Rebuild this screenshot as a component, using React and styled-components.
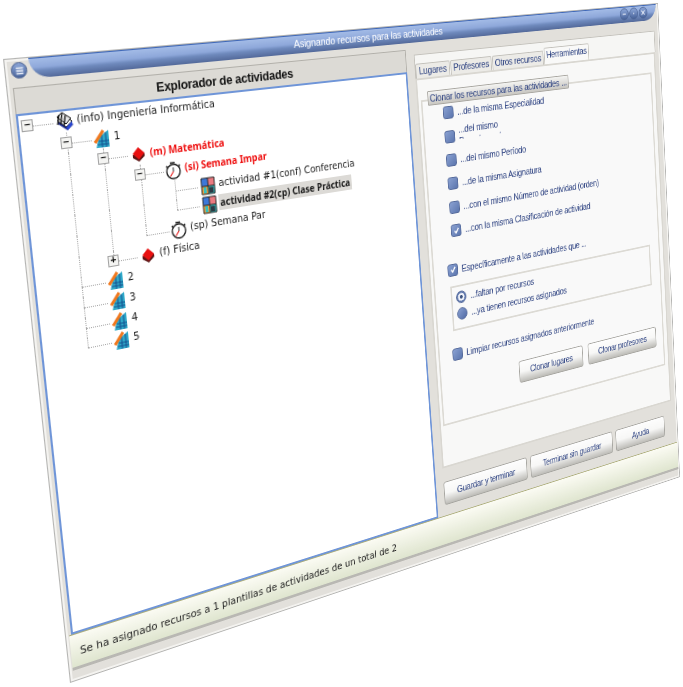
import React from "react";
import styled, { createGlobalStyle } from "styled-components";

// the window is a plain 800x600 page, tilted onto these four corners of the shot
const SRC_W = 800;
const SRC_H = 600;
const tilt = ([x0, y0], [x1, y1], [x2, y2], [x3, y3]) => {
  const dx1 = x1 - x2, dx2 = x3 - x2, sx = x0 - x1 + x2 - x3;
  const dy1 = y1 - y2, dy2 = y3 - y2, sy = y0 - y1 + y2 - y3;
  const det = dx1 * dy2 - dx2 * dy1;
  const g = (sx * dy2 - dx2 * sy) / det;
  const h = (dx1 * sy - sx * dy1) / det;
  const a = x1 - x0 + g * x1, b = x3 - x0 + h * x3;
  const d = y1 - y0 + g * y1, e = y3 - y0 + h * y3;
  return `matrix3d(${a / SRC_W},${d / SRC_W},0,${g / SRC_W},${b / SRC_H},${e / SRC_H},0,${h / SRC_H},0,0,1,0,${x0},${y0},0,1)`;
};
const WINDOW_TILT = tilt([3, 59], [658, 3], [680, 477], [70, 683]);

const Global = createGlobalStyle`
  html, body { margin: 0; background: #fff; overflow: hidden; }
`;

const Stage = styled.div`
  width: 683px;
  height: 687px;
  overflow: hidden;
`;

const Window = styled.div`
  width: ${SRC_W}px;
  height: ${SRC_H}px;
  box-sizing: border-box;
  display: flex;
  flex-direction: column;
  background: #e2e0db;
  border: 1px solid #b4b4b2;
  box-shadow: inset 0 0 0 2px #f4f3f0;
  transform-origin: 0 0;
  transform: ${WINDOW_TILT};
  filter: blur(0.35px);
  font-family: "Liberation Sans", Arial, sans-serif;
`;

const TitleRow = styled.div`
  display: flex;
  align-items: flex-start;
  height: 18px;
  padding-left: 5px;
  gap: 2px;
  flex: none;
`;

const RoundButton = styled.div`
  width: ${(p) => p.$size}px;
  height: ${(p) => p.$size}px;
  margin-top: ${(p) => p.$top}px;
  flex: none;
  border-radius: 50%;
  background: linear-gradient(#8ca6d8, #48639a);
  border: 1px solid #4a6191;
  box-sizing: border-box;
  display: flex;
  align-items: center;
  justify-content: center;
`;

const TitleBar = styled.div`
  flex: 1;
  height: 19px;
  margin-right: 3px;
  position: relative;
  display: flex;
  justify-content: center;
  box-sizing: border-box;
  border-top: 1px solid #3f68b8;
  border-radius: 0 0 20px 20px;
  background: linear-gradient(#a3bbe6 0%, #8ea8da 45%, #6f8abd 62%, #53699a 100%);
  padding: 2px 40px 0 0;
`;

const TitleText = styled.span`
  color: #fff;
  font-size: 10.6px;
  letter-spacing: -0.15px;
  line-height: 12px;
`;

const Controls = styled.div`
  position: absolute;
  right: 14px;
  top: 1px;
  display: flex;
  gap: 1px;
`;

const Body = styled.div`
  flex: 1;
  display: flex;
  gap: 10px;
  padding: 8px 7px 0 5px;
  min-height: 0;
`;

const ExplorerColumn = styled.div`
  width: 426px;
  flex: none;
  display: flex;
  flex-direction: column;
`;

const ExplorerHeader = styled.div`
  height: 24px;
  flex: none;
  background: #dcdad5;
  border: 1px solid #b2b0aa;
  border-bottom: none;
  box-sizing: border-box;
  text-align: center;
  font-weight: bold;
  font-size: 12.5px;
  letter-spacing: -0.25px;
  line-height: 24px;
  color: #111;
`;

const TreeBox = styled.div`
  flex: 1;
  background: #fff;
  border: 2px solid #6f95d8;
  font-family: "DejaVu Sans", sans-serif;
  font-size: 10.1px;
  color: #1a1a1a;
`;

const TreeRow = styled.div`
  display: flex;
  align-items: center;
  height: 19.7px;
`;

const Cell = styled.div`
  width: 34.5px;
  height: 100%;
  flex: none;
  position: relative;
  &::before {
    content: "";
    display: ${(p) => (p.$kind === "pass" || p.$kind === "tee" || p.$kind === "end" ? "block" : "none")};
    position: absolute;
    left: 8px;
    top: 0;
    height: ${(p) => (p.$kind === "end" ? "50%" : "100%")};
    border-left: 1px dotted #a8a8a8;
  }
  &::after {
    content: "";
    display: ${(p) => (p.$kind === "tee" || p.$kind === "end" || p.$kind === "root" ? "block" : "none")};
    position: absolute;
    left: 8px;
    top: 50%;
    width: 24px;
    border-top: 1px dotted #a8a8a8;
  }
`;

const Expander = styled.span`
  position: absolute;
  z-index: 1;
  left: 2px;
  top: 4px;
  width: 11px;
  height: 11px;
  box-sizing: border-box;
  background: #f4f4f2;
  border: 1px solid #a2a2a2;
  color: #111;
  font: bold 10px/9px "Liberation Mono", monospace;
  text-align: center;
`;

const IconSlot = styled.span`
  width: 20px;
  height: 20px;
  flex: none;
  margin-left: -2px;
  display: flex;
`;

const NodeLabel = styled.span`
  margin: 0 0 3px 0;
  padding: 1px 2px;
  white-space: nowrap;
  color: ${(p) => (p.$active ? "#ee1111" : "#1a1a1a")};
  font-family: ${(p) => (p.$active || p.$selected ? '"Noto Sans", sans-serif' : "inherit")};
  font-size: ${(p) => (p.$active || p.$selected ? "10px" : "inherit")};
  font-weight: ${(p) => (p.$active || p.$selected ? "bold" : "normal")};
  background: ${(p) => (p.$selected ? "#dcdad6" : "transparent")};
`;

const SideColumn = styled.div`
  flex: 1;
  min-width: 0;
  display: flex;
  flex-direction: column;
  margin-top: 6px;
  margin-bottom: 6px;
`;

const TabStrip = styled.div`
  height: 25px;
  flex: none;
  display: flex;
  align-items: flex-end;
  background: #f6f6f4;
  border: 1px solid #c4c2bc;
  border-bottom: none;
`;

const Tab = styled.div`
  width: ${(p) => p.$width}px;
  height: ${(p) => (p.$on ? 19 : 16)}px;
  box-sizing: border-box;
  margin-right: 1px;
  background: ${(p) => (p.$on ? "#f9f9f8" : "#ecebe7")};
  border: 1px solid #c2c0ba;
  border-bottom: none;
  border-radius: 2px 2px 0 0;
  text-align: center;
  font-size: 10.6px;
  letter-spacing: -0.25px;
  line-height: 15px;
  white-space: nowrap;
  color: #2c4180;
`;

const TabPane = styled.div`
  height: 439px;
  width: 349px;
  flex: none;
  box-sizing: border-box;
  background: #f8f8f7;
  border: 2px solid #d9d7d1;
  padding: 22px 5px 0 3px;
`;

const GroupBox = styled.div`
  position: relative;
  height: 367px;
  box-sizing: border-box;
  background: #f9f9f9;
  border: 2px solid #dcdad4;
  padding: 2px 11px 0 26px;
  color: #2c4180;
  font-size: 10.6px;
  letter-spacing: -0.25px;
`;

const GroupTitle = styled.div`
  position: absolute;
  left: 7px;
  top: -11px;
  width: 198px;
  height: 16px;
  background: linear-gradient(#f4f4f2, #c9c7c2);
  border: 1px solid #a8a6a0;
  box-sizing: border-box;
  border-radius: 1px;
  font-size: 10.8px;
  letter-spacing: -0.25px;
  line-height: 15px;
  text-align: center;
  color: #2c4180;
  white-space: nowrap;
`;

const CheckRow = styled.div`
  display: flex;
  align-items: center;
  gap: 5px;
  height: ${(p) => p.$height || 26.4}px;
  margin-left: ${(p) => p.$indent || 0}px;
  margin-top: ${(p) => p.$top || 0}px;
  white-space: nowrap;
`;

const Box = styled.span`
  width: 14px;
  height: 14px;
  flex: none;
  box-sizing: border-box;
  border-radius: 3px;
  background: linear-gradient(135deg, #8aa1d2, #5b75ad);
  border: 1px solid #54699a;
  display: flex;
  align-items: center;
  justify-content: center;
`;

const Radio = styled.span`
  width: 14px;
  height: 14px;
  flex: none;
  box-sizing: border-box;
  border-radius: 50%;
  background: ${(p) => (p.$on ? "radial-gradient(circle, #40557f 0 22%, #f2f4fa 26% 50%, #6179ae 56%)" : "linear-gradient(135deg, #8aa1d2, #5069a4)")};
  border: 1px solid #54699a;
`;

const ClippedLabel = styled.span`
  display: block;
  height: 17px;
  margin-bottom: 8px;
  line-height: 13px;
  overflow: hidden;
`;

const FrameBox = styled.div`
  height: 51px;
  width: 299px;
  box-sizing: border-box;
  margin: 5px 0 0 -6px;
  border: 2px solid #dcdad4;
  padding: 3px 0 0 4px;
`;

const ButtonRow = styled.div`
  display: flex;
  justify-content: ${(p) => p.$justify || "flex-end"};
  gap: ${(p) => p.$gap}px;
  margin-top: ${(p) => p.$top}px;
`;

const PushButton = styled.div`
  width: ${(p) => p.$width}px;
  height: ${(p) => p.$height}px;
  box-sizing: border-box;
  background: linear-gradient(#fdfdfd 0%, #f7f7f6 50%, #bdbcb7 100%);
  border: 1px solid #a6a5a0;
  border-radius: 3px;
  text-align: center;
  font-size: 10.6px;
  letter-spacing: -0.35px;
  line-height: ${(p) => p.$height - 3}px;
  color: #2c4180;
`;

const StatusBar = styled.div`
  height: 36px;
  flex: none;
  margin: 0 1px 0 3px;
  box-sizing: border-box;
  border-top: 1px solid #adae7c;
  border-bottom: 3px solid #b9b8b3;
  background: linear-gradient(#fbfbf3, #dfe5cf);
  padding-left: 9px;
  font-family: "DejaVu Sans", sans-serif;
  font-size: 10.4px;
  line-height: 34px;
  color: #222;
`;

const StatusFoot = styled.div`
  height: 10px;
  flex: none;
`;

const BooksIcon = () => (
  <svg viewBox="0 0 20 20" width="20" height="20">
    <path d="M3 11l9 7 6-5-9-7z" fill="#15258f" />
    <path d="M3 8l8 7 6-5-8-7z" fill="#fff" stroke="#111" strokeWidth="1" />
    <path d="M3 5l8 7 5-5-8-6z" fill="#e8e8e8" stroke="#111" strokeWidth="1" />
    <path d="M5 3l-2 9M8 2l-2 10M11 4l-2 9" stroke="#111" strokeWidth="1.2" />
    <path d="M11 15l6-5v3l-5 5z" fill="#2a49d8" />
  </svg>
);

const PlanIcon = () => (
  <svg viewBox="0 0 20 20" width="20" height="20">
    <path d="M7 8l10-6v16H4z" fill="#2fa9c9" />
    <path d="M7 12h10M5.5 15h11.5M10 6v12M14 4v14" stroke="#14508f" strokeWidth="1" />
    <path d="M3 13L12 2" stroke="#f0781e" strokeWidth="3" />
  </svg>
);

const RedBookIcon = () => (
  <svg viewBox="0 0 20 20" width="20" height="20">
    <path d="M4 10v3l6 4 6-5V9z" fill="#5c1414" />
    <path d="M4 9l6-6 6 6-6 6z" fill="#e81010" />
  </svg>
);

const WatchIcon = () => (
  <svg viewBox="0 0 20 20" width="20" height="20">
    <circle cx="10" cy="11" r="7" fill="#fff" stroke="#222" strokeWidth="1.4" />
    <path d="M7 2.5h5M4 5l-1 1.5M16 5l1 1.5" stroke="#222" strokeWidth="1.4" />
    <path d="M10 7v4" stroke="#222" strokeWidth="1" />
    <path d="M10 11l-3.5 4.5" stroke="#e81414" strokeWidth="1.2" />
  </svg>
);

const ActivityIcon = () => (
  <svg viewBox="0 0 20 20" width="20" height="20">
    <rect x="3" y="2" width="7" height="8" fill="#3d78d8" />
    <rect x="10" y="2" width="7" height="8" fill="#ea7a80" />
    <rect x="3" y="10" width="7" height="8" fill="#f0a040" />
    <rect x="10" y="10" width="7" height="8" fill="#35c0c0" />
    <rect x="5" y="11" width="3" height="6" fill="#35c0c0" />
    <rect x="11" y="11.5" width="4.5" height="5.5" fill="#2c3a44" />
    <path d="M10 2v16M3 10h14M3 2h14v16H3z" fill="none" stroke="#2a2a2a" strokeWidth="1" />
  </svg>
);

const Check = () => (
  <svg viewBox="0 0 12 12" width="11" height="11">
    <path d="M3 6l2.2 2.6L9 3" fill="none" stroke="#fff" strokeWidth="1.8" />
  </svg>
);

const Glyph = ({ d }) => (
  <svg viewBox="0 0 12 12" width="10" height="10">
    <path d={d} fill="none" stroke="#e8edf8" strokeWidth="1.6" />
  </svg>
);

// kinds per column: "" blank, pass, tee, end, root; `exp` puts a box on the last one
const nodes = [
  { cells: ["root"], exp: "−", Icon: BooksIcon, text: "(info) Ingeniería Informática" },
  { cells: ["", "tee"], exp: "−", Icon: PlanIcon, text: "1" },
  { cells: ["", "pass", "tee"], exp: "−", Icon: RedBookIcon, text: "(m) Matemática", active: true },
  { cells: ["", "pass", "pass", "tee"], exp: "−", Icon: WatchIcon, text: "(si) Semana Impar", active: true },
  { cells: ["", "pass", "pass", "pass", "tee"], Icon: ActivityIcon, text: "actividad #1(conf) Conferencia" },
  { cells: ["", "pass", "pass", "pass", "end"], Icon: ActivityIcon, text: "actividad #2(cp) Clase Práctica", selected: true },
  { cells: ["", "pass", "pass", "end"], Icon: WatchIcon, text: "(sp) Semana Par" },
  { cells: ["", "pass", "end"], exp: "+", Icon: RedBookIcon, text: "(f) Física" },
  { cells: ["", "tee"], Icon: PlanIcon, text: "2" },
  { cells: ["", "tee"], Icon: PlanIcon, text: "3" },
  { cells: ["", "tee"], Icon: PlanIcon, text: "4" },
  { cells: ["", "end"], Icon: PlanIcon, text: "5" },
];

const checks = [
  { text: "...de la misma Especialidad" },
  { text: "...del mismo", clipped: "Departamento" },
  { text: "...del mismo Período" },
  { text: "...de la misma Asignatura" },
  { text: "...con el mismo Número de actividad (orden)" },
  { text: "...con la misma Clasificación de actividad", on: true },
];

export default function App() {
  return (
    <Stage>
      <Global />
      <Window>
        <TitleRow>
          <RoundButton $size={15} $top={3}>
            <Glyph d="M2 3h8M2 6h8M2 9h8" />
          </RoundButton>
          <TitleBar>
            <TitleText>Asignando recursos para las actividades</TitleText>
            <Controls>
              <RoundButton $size={14} $top={0}><Glyph d="M3 6h6" /></RoundButton>
              <RoundButton $size={14} $top={0}><Glyph d="M5 6h2" /></RoundButton>
              <RoundButton $size={14} $top={0}><Glyph d="M3 3l6 6M9 3l-6 6" /></RoundButton>
            </Controls>
          </TitleBar>
        </TitleRow>
        <Body>
          <ExplorerColumn>
            <ExplorerHeader>Explorador de actividades</ExplorerHeader>
            <TreeBox>
              {nodes.map((n) => (
                <TreeRow key={n.text}>
                  {n.cells.map((kind, i) => (
                    <Cell key={i} $kind={kind}>
                      {n.exp && i === n.cells.length - 1 && <Expander>{n.exp}</Expander>}
                    </Cell>
                  ))}
                  <IconSlot><n.Icon /></IconSlot>
                  <NodeLabel $active={n.active} $selected={n.selected}>{n.text}</NodeLabel>
                </TreeRow>
              ))}
            </TreeBox>
          </ExplorerColumn>
          <SideColumn>
            <TabStrip>
              <Tab $width={45}>Lugares</Tab>
              <Tab $width={56}>Profesores</Tab>
              <Tab $width={73}>Otros recursos</Tab>
              <Tab $width={67} $on>Herramientas</Tab>
            </TabStrip>
            <TabPane>
              <GroupBox>
                <GroupTitle>Clonar los recursos para las actividades ...</GroupTitle>
                {checks.map((c) => (
                  <CheckRow key={c.text}>
                    <Box>{c.on && <Check />}</Box>
                    {c.clipped ? (
                      <ClippedLabel>{c.text}<br />{c.clipped}</ClippedLabel>
                    ) : (
                      <span>{c.text}</span>
                    )}
                  </CheckRow>
                ))}
                <CheckRow $indent={-8} $top={17}>
                  <Box><Check /></Box>
                  <span>Específicamente a las actividades que ...</span>
                </CheckRow>
                <FrameBox>
                  <CheckRow $height={19} $indent={1}>
                    <Radio $on />
                    <span>...faltan por recursos</span>
                  </CheckRow>
                  <CheckRow $height={19} $indent={1}>
                    <Radio />
                    <span>...ya tienen recursos asignados</span>
                  </CheckRow>
                </FrameBox>
                <CheckRow $indent={-9} $top={14}>
                  <Box />
                  <span>Limpiar recursos asignados anteriormente</span>
                </CheckRow>
                <ButtonRow $gap={8} $top={13}>
                  <PushButton $width={96} $height={26}>Clonar lugares</PushButton>
                  <PushButton $width={110} $height={26}>Clonar profesores</PushButton>
                </ButtonRow>
              </GroupBox>
            </TabPane>
            <ButtonRow $justify="flex-start" $gap={5} $top={16}>
              <PushButton $width={118} $height={27}>Guardar y terminar</PushButton>
              <PushButton $width={127} $height={27}>Terminar sin guardar</PushButton>
              <PushButton $width={81} $height={27}>Ayuda</PushButton>
            </ButtonRow>
          </SideColumn>
        </Body>
        <StatusBar>Se ha asignado recursos a 1 plantillas de actividades de un total de 2</StatusBar>
        <StatusFoot />
      </Window>
    </Stage>
  );
}
